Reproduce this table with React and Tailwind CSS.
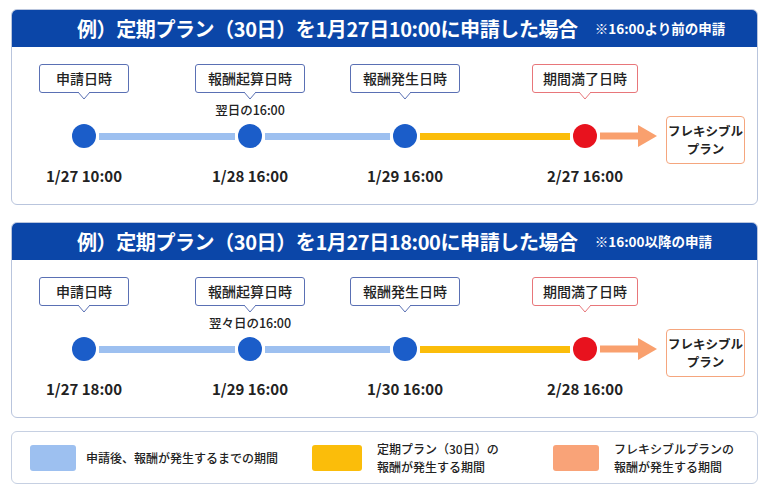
import React from "react";

const panels = [
    {
        title: "例）定期プラン（30日）を1月27日10:00に申請した場合",
        note: "※16:00より前の申請",
        sub: "翌日の16:00",
        dates: ["1/27 10:00", "1/28 16:00", "1/29 16:00", "2/27 16:00"],
    },
    {
        title: "例）定期プラン（30日）を1月27日18:00に申請した場合",
        note: "※16:00以降の申請",
        sub: "翌々日の16:00",
        dates: ["1/27 18:00", "1/29 16:00", "1/30 16:00", "2/28 16:00"],
    },
];

function Callout({ label, red, w }) {
    const stroke = red ? "#e8767a" : "#5a70b4";
    return (
        <div
            className={`relative ${w} h-[29px] shrink-0 rounded-[3px] border bg-white flex items-center justify-center text-[14px] font-medium text-[#222] whitespace-nowrap ${red ? "border-[#e8767a]" : "border-[#5a70b4]"}`}
        >
            {label}
            <svg
                className="absolute left-1/2 -translate-x-1/2 top-[27px] overflow-visible"
                width="12"
                height="8"
                viewBox="0 0 12 8"
            >
                <path d="M0 0 L12 0 L6 7 Z" fill="white" />
                <path d="M0 0 L6 7 L12 0" fill="none" stroke={stroke} strokeWidth="1" />
            </svg>
        </div>
    );
}

function Node({ label, w, red, sub, date }) {
    return (
        <div className="flex flex-col items-center w-6 shrink-0">
            <Callout label={label} w={w} red={red} />
            <div className="h-[31px] pt-[10px] text-[12.5px] leading-[14px] font-medium text-[#222] whitespace-nowrap">
                {sub}
            </div>
            <div className={`w-6 h-6 rounded-full shrink-0 ${red ? "bg-[#e8121e]" : "bg-[#1b5dc9]"}`}></div>
            <div className="mt-[19px] text-[15px] leading-[18px] font-bold text-[#222] whitespace-nowrap">
                {date}
            </div>
        </div>
    );
}

function Bar({ w, color }) {
    return (
        <div className="mt-[60px] h-6 mx-[3px] flex items-center shrink-0">
            <div className={`h-[7px] ${w} ${color}`}></div>
        </div>
    );
}

function Panel({ title, note, sub, dates }) {
    return (
        <div className="w-[747px] rounded-md border border-[#b9c5dd] overflow-hidden bg-white">
            <div className="h-[37px] bg-[#0b46a8] flex items-center pl-[65px] text-white">
                <span className="text-[20px] font-bold leading-none tracking-[-0.4px]">{title}</span>
                <span className="ml-[17px] text-[13.5px] font-bold leading-none">{note}</span>
            </div>
            <div className="flex items-start pl-[60px] pt-[17px] pb-[19px]">
                <Node label="申請日時" w="w-[90px]" date={dates[0]} />
                <Bar w="w-[136px]" color="bg-[#9dc0f0]" />
                <Node label="報酬起算日時" w="w-[110px]" sub={sub} date={dates[1]} />
                <Bar w="w-[125px]" color="bg-[#9dc0f0]" />
                <Node label="報酬発生日時" w="w-[110px]" date={dates[2]} />
                <Bar w="w-[150px]" color="bg-[#fbbd0a]" />
                <Node label="期間満了日時" w="w-[106px]" red date={dates[3]} />
                <svg className="mt-[61px] ml-[3px] shrink-0" width="57" height="22" viewBox="0 0 57 22">
                    <rect x="0" y="7.5" width="39" height="7" fill="#f9a06e" />
                    <path d="M38 0 L57 11 L38 22 Z" fill="#f9a06e" />
                </svg>
                <div className="mt-[52px] ml-[9px] w-[79px] h-[48px] shrink-0 rounded-[4px] border border-[#f5a67e] flex flex-col items-center justify-center text-[12.5px] leading-[18px] font-bold text-[#222]">
                    <span>フレキシブル</span>
                    <span>プラン</span>
                </div>
            </div>
        </div>
    );
}

export default function App() {
    return (
        <div className="w-[770px] h-[490px] bg-white pl-[11px] pt-[9px] font-['Noto_Sans_CJK_JP','Noto_Sans',sans-serif]">
            <div className="flex flex-col gap-[17px]">
                {panels.map((p, i) => (
                    <Panel key={i} {...p} />
                ))}
            </div>
            <div className="mt-[13px] w-[747px] h-[53px] rounded-md border border-[#c6d0e2] flex items-center pl-[18px] text-[12px] font-medium text-[#222]">
                <div className="w-[282px] flex items-center">
                    <div className="w-[46px] h-[26px] rounded-[3px] bg-[#9dc0f0] shrink-0"></div>
                    <span className="ml-[10px] leading-[18px]">申請後、報酬が発生するまでの期間</span>
                </div>
                <div className="w-[241px] flex items-center">
                    <div className="w-[50px] h-[26px] rounded-[3px] bg-[#fbbd0a] shrink-0"></div>
                    <span className="ml-[15px] leading-[18px]">
                        定期プラン（30日）の
                        <br />
                        報酬が発生する期間
                    </span>
                </div>
                <div className="flex items-center">
                    <div className="w-[46px] h-[26px] rounded-[3px] bg-[#f9a378] shrink-0"></div>
                    <span className="ml-[15px] leading-[18px]">
                        フレキシブルプランの
                        <br />
                        報酬が発生する期間
                    </span>
                </div>
            </div>
        </div>
    );
}
